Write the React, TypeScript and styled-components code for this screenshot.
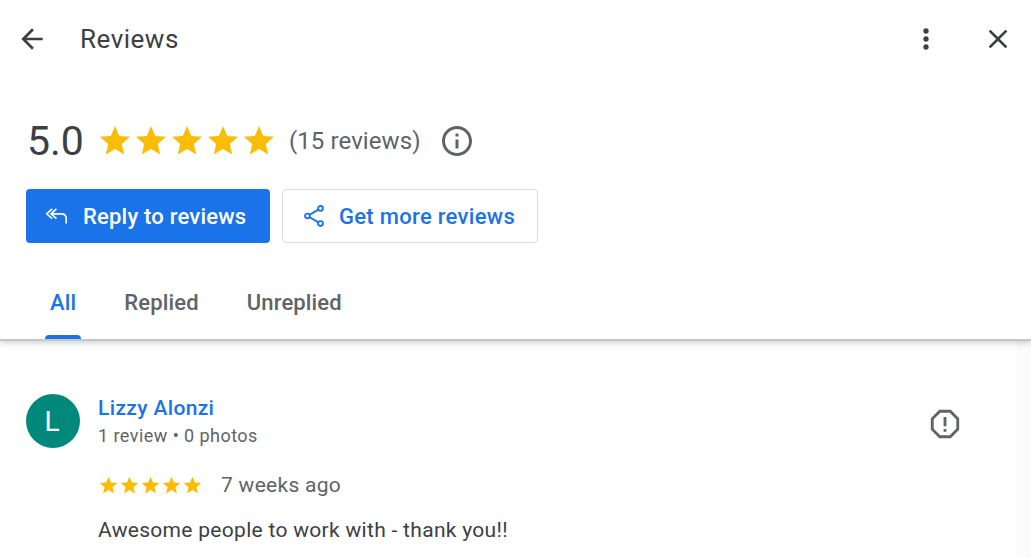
import React from "react";
import styled, { createGlobalStyle } from "styled-components";

const GlobalStyle = createGlobalStyle`
  html, body {
    margin: 0;
    padding: 0;
    background: #fff;
    overflow: hidden;
  }
  * {
    box-sizing: border-box;
  }
`;

const STAR = "M12 17.27L18.18 21l-1.64-7.03L22 9.24l-7.19-.61L12 2 9.19 8.63 2 9.24l5.46 4.73L5.82 21z";

const Star: React.FC<{ size: number }> = ({ size }) => (
  <svg width={size} height={size} viewBox="0 0 24 24" fill="#fbbc04">
    <path d={STAR} />
  </svg>
);

const Stars: React.FC<{ size: number }> = ({ size }) => (
  <StarRow>
    {[0, 1, 2, 3, 4].map((i) => (
      <Star key={i} size={size} />
    ))}
  </StarRow>
);

const App: React.FC = () => {
  return (
    <Page>
      <GlobalStyle />
      <Header>
        <TopBar>
          <IconSlot>
            <svg width="32" height="32" viewBox="0 0 24 24" fill="#3c4043">
              <path d="M20 11H7.83l5.59-5.59L12 4l-8 8 8 8 1.41-1.41L7.83 13H20v-2z" />
            </svg>
          </IconSlot>
          <Title>Reviews</Title>
          <TopActions>
            <svg width="32" height="32" viewBox="0 0 24 24" fill="#3c4043">
              <circle cx="12" cy="6" r="2" />
              <circle cx="12" cy="12" r="2" />
              <circle cx="12" cy="18" r="2" />
            </svg>
            <svg width="32" height="32" viewBox="0 0 24 24" fill="#3c4043">
              <path d="M19 6.41L17.59 5 12 10.59 6.41 5 5 6.41 10.59 12 5 17.59 6.41 19 12 13.41 17.59 19 19 17.59 13.41 12z" />
            </svg>
          </TopActions>
        </TopBar>
        <Summary>
          <Score>5.0</Score>
          <Stars size={36} />
          <Count>(15 reviews)</Count>
          <svg width="36" height="36" viewBox="0 0 24 24" fill="#5f6368">
            <path d="M11 7h2v2h-2zm0 4h2v6h-2zm1-9C6.48 2 2 6.48 2 12s4.48 10 10 10 10-4.48 10-10S17.52 2 12 2zm0 18c-4.41 0-8-3.59-8-8s3.59-8 8-8 8 3.59 8 8-3.59 8-8 8z" />
          </svg>
        </Summary>
        <Actions>
          <PrimaryButton>
            <svg width="26" height="26" viewBox="0 0 24 24" fill="none" stroke="#fff" strokeWidth="1.5">
              <path d="M7.5 5.5L2.5 10l5 4.5M11.5 5.5L6.5 10l5 4.5M6.5 10H16c2.8 0 4.5 1.8 4.5 4.5V19" />
            </svg>
            Reply to reviews
          </PrimaryButton>
          <OutlineButton>
            <svg width="26" height="26" viewBox="0 0 24 24" fill="none" stroke="#1a73e8" strokeWidth="1.7">
              <circle cx="18" cy="5" r="2.2" />
              <circle cx="6" cy="12" r="2.2" />
              <circle cx="18" cy="19" r="2.2" />
              <path d="M8 10.9l8.1-4.8M8 13.1l8.1 4.8" />
            </svg>
            Get more reviews
          </OutlineButton>
        </Actions>
        <Tabs>
          <Tab $active>All</Tab>
          <Tab>Replied</Tab>
          <Tab>Unreplied</Tab>
        </Tabs>
      </Header>
      <Body>
        <Review>
          <Avatar>L</Avatar>
          <ReviewMain>
            <ReviewerRow>
              <div>
                <Name>Lizzy Alonzi</Name>
                <Meta>1 review • 0 photos</Meta>
              </div>
              <ReportIcon width="34" height="34" viewBox="0 0 24 24" fill="none" stroke="#5f6368" strokeWidth="2">
                <path d="M8.3 3h7.4L21 8.3v7.4L15.7 21H8.3L3 15.7V8.3z" />
                <path d="M12 7v6.5M12 15.5v2" />
              </ReportIcon>
            </ReviewerRow>
            <RatingRow>
              <Stars size={21} />
              <Age>7 weeks ago</Age>
            </RatingRow>
            <ReviewText>Awesome people to work with - thank you!!</ReviewText>
          </ReviewMain>
        </Review>
        <ScrollTrack />
      </Body>
    </Page>
  );
};

export default App;

const Page = styled.div`
  width: 1031px;
  height: 558px;
  display: flex;
  flex-direction: column;
  font-family: Roboto, "Liberation Sans", sans-serif;
  overflow: hidden;
`;

const Header = styled.header`
  height: 341px;
  flex: none;
  border-bottom: 2px solid #c4c6c8;
  box-shadow: 0 2px 6px rgba(60, 64, 67, 0.25);
  position: relative;
  z-index: 1;
  background: #fff;
`;

const TopBar = styled.div`
  height: 78px;
  display: flex;
  align-items: center;
  padding: 0 17px 0 16px;
`;

const IconSlot = styled.div`
  width: 64px;
  height: 32px;
`;

const Title = styled.h1`
  margin: 0;
  font-size: 26px;
  font-weight: 400;
  letter-spacing: 0.5px;
  color: #3c4043;
`;

const TopActions = styled.div`
  margin-left: auto;
  display: flex;
  gap: 40px;
`;

const Summary = styled.div`
  display: flex;
  align-items: center;
  height: 48px;
  margin-top: 39px;
  padding-left: 27px;

  svg {
    flex: none;
  }
`;

const Score = styled.span`
  font-size: 41px;
  color: #3c4043;
  margin-right: 13px;
  margin-top: -1px;
`;

const StarRow = styled.span`
  display: inline-flex;
`;

const Count = styled.span`
  font-size: 24px;
  letter-spacing: 0.1px;
  color: #5f6368;
  margin: 0 18px 0 12px;
`;

const Actions = styled.div`
  display: flex;
  gap: 12px;
  padding-left: 26px;
  margin-top: 24px;
`;

const PrimaryButton = styled.button`
  width: 244px;
  height: 54px;
  display: flex;
  align-items: center;
  gap: 13px;
  padding: 0 0 0 18px;
  border: none;
  border-radius: 4px;
  background: #1a73e8;
  color: #fff;
  font: 500 22px Roboto, sans-serif;
  letter-spacing: 0.2px;
`;

const OutlineButton = styled(PrimaryButton)`
  width: 256px;
  gap: 12px;
  background: #fff;
  color: #1a73e8;
  border: 1px solid #dadce0;
  letter-spacing: 0.3px;
`;

const Tabs = styled.nav`
  display: flex;
  gap: 48px;
  padding-left: 50px;
  margin-top: 36px;
`;

const Tab = styled.div<{ $active?: boolean }>`
  position: relative;
  height: 60px;
  line-height: 48px;
  font-size: 22px;
  font-weight: 500;
  letter-spacing: 0.15px;
  color: ${(p) => (p.$active ? "#1a73e8" : "#5f6368")};

  &::after {
    content: "";
    display: ${(p) => (p.$active ? "block" : "none")};
    position: absolute;
    left: -5px;
    right: -5px;
    bottom: 0;
    height: 4px;
    border-radius: 4px 4px 0 0;
    background: #1a73e8;
  }
`;

const Body = styled.main`
  flex: 1;
  display: flex;
  background: #fff;
`;

const Review = styled.article`
  flex: 1;
  display: flex;
  gap: 18px;
  padding: 53px 0 0 26px;
`;

const Avatar = styled.div`
  width: 54px;
  height: 54px;
  flex: none;
  border-radius: 50%;
  background: #00897b;
  color: #fff;
  display: flex;
  align-items: center;
  justify-content: center;
  font-size: 28px;
  padding-right: 2px;
`;

const ReviewMain = styled.div`
  flex: 1;
`;

const ReviewerRow = styled.div`
  display: flex;
  justify-content: space-between;
  align-items: flex-start;
  padding-right: 55px;
`;

const ReportIcon = styled.svg`
  margin-top: 13px;
`;

const Name = styled.div`
  font-size: 21px;
  font-weight: 500;
  color: #1a73e8;
  line-height: 28px;
  letter-spacing: 0.35px;
`;

const Meta = styled.div`
  font-size: 18px;
  color: #5f6368;
  line-height: 24px;
  margin-top: 2px;
  letter-spacing: 0.45px;
`;

const RatingRow = styled.div`
  display: flex;
  align-items: center;
  margin-top: 25px;
`;

const Age = styled.span`
  font-size: 21px;
  color: #5f6368;
  margin-left: 18px;
  letter-spacing: 0.28px;
`;

const ReviewText = styled.p`
  margin: 21px 0 0;
  font-size: 21px;
  color: #3c4043;
  letter-spacing: 0.3px;
`;

const ScrollTrack = styled.div`
  width: 14px;
  flex: none;
  background: #fbfbfb;
`;
